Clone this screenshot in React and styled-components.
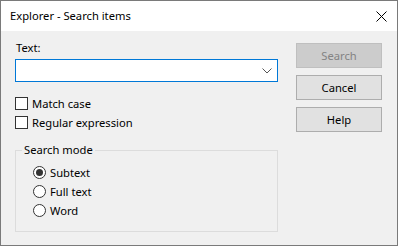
import React from "react";
import styled, { createGlobalStyle } from "styled-components";

const Global = createGlobalStyle`
  html, body { margin: 0; padding: 0; background: #ffffff; }
  body { font-family: "Noto Sans", "Open Sans", sans-serif; font-size: 11.2px; color: #000; }
  * { box-sizing: border-box; }
`;

const Window = styled.div`
  width: 398px;
  height: 246px;
  border: 1px solid #7a7a7a;
  display: flex;
  flex-direction: column;
  background: #f0f0f0;
  overflow: hidden;
`;

const TitleBar = styled.div`
  height: 30px;
  flex: none;
  background: #ffffff;
  display: flex;
  align-items: center;
  justify-content: space-between;
  padding: 0 10px 0 9px;
`;

const Title = styled.span`
  line-height: 16px;
  margin-top: -1px;
`;

const CloseBtn = styled.svg`
  width: 11px;
  height: 11px;
`;

const Body = styled.div`
  flex: 1;
  display: flex;
  gap: 18px;
  padding: 9px 15px 0 14px;
`;

const LeftCol = styled.div`
  width: 263px;
  display: flex;
  flex-direction: column;
`;

const Label = styled.div`
  line-height: 16px;
  height: 16px;
  padding-left: 1px;
  margin-bottom: 3px;
`;

const Combo = styled.div`
  height: 23px;
  border: 1px solid #0078d7;
  background: #ffffff;
  display: flex;
  align-items: center;
  justify-content: flex-end;
  padding-right: 5px;
`;

const CheckList = styled.div`
  margin-top: 12px;
  display: flex;
  flex-direction: column;
`;

const OptionRow = styled.label`
  height: 19px;
  display: flex;
  align-items: center;
  gap: 4px;
  line-height: 16px;
`;

const CheckBox = styled.span`
  width: 13px;
  height: 13px;
  border: 1px solid #333333;
  background: #ffffff;
  flex: none;
`;

const Radio = styled.span`
  width: 13px;
  height: 13px;
  border: 1px solid #333333;
  border-radius: 50%;
  background: #ffffff;
  flex: none;
  display: flex;
  align-items: center;
  justify-content: center;
  &::after {
    content: "";
    width: 7px;
    height: 7px;
    border-radius: 50%;
    background: ${(p) => (p.$checked ? "#333333" : "transparent")};
  }
`;

const Group = styled.fieldset`
  margin: 10px 0 0 0;
  padding: 0;
  border: 1px solid #dcdcdc;
  min-width: 0;
`;

const Legend = styled.legend`
  margin-left: 6px;
  padding: 0 2px;
  line-height: 16px;
`;

const RadioList = styled.div`
  display: flex;
  flex-direction: column;
  padding: 5px 0 11px 17px;
`;

const RightCol = styled.div`
  width: 86px;
  display: flex;
  flex-direction: column;
  gap: 7px;
  padding-top: 3px;
`;

const Button = styled.button`
  height: 25px;
  width: 86px;
  font-family: inherit;
  font-size: inherit;
  border: 1px solid ${(p) => (p.disabled ? "#bfbfbf" : "#adadad")};
  background: ${(p) => (p.disabled ? "#cccccc" : "#e1e1e1")};
  color: ${(p) => (p.disabled ? "#838383" : "#000000")};
  padding: 0;
  line-height: 16px;
`;

export default function App() {
  return (
    <>
      <Global />
      <Window>
        <TitleBar>
          <Title>Explorer - Search items</Title>
          <CloseBtn viewBox="0 0 11 11">
            <path d="M0.5 0.5 L10.5 10.5 M10.5 0.5 L0.5 10.5" stroke="#000" strokeWidth="1" fill="none" />
          </CloseBtn>
        </TitleBar>
        <Body>
          <LeftCol>
            <Label>Text:</Label>
            <Combo>
              <svg width="10" height="6" viewBox="0 0 10 6">
                <path d="M0.5 0.5 L5 5 L9.5 0.5" stroke="#555" strokeWidth="1" fill="none" />
              </svg>
            </Combo>
            <CheckList>
              <OptionRow><CheckBox />Match case</OptionRow>
              <OptionRow><CheckBox />Regular expression</OptionRow>
            </CheckList>
            <Group>
              <Legend>Search mode</Legend>
              <RadioList>
                <OptionRow><Radio $checked />Subtext</OptionRow>
                <OptionRow><Radio />Full text</OptionRow>
                <OptionRow><Radio />Word</OptionRow>
              </RadioList>
            </Group>
          </LeftCol>
          <RightCol>
            <Button disabled>Search</Button>
            <Button>Cancel</Button>
            <Button>Help</Button>
          </RightCol>
        </Body>
      </Window>
    </>
  );
}
